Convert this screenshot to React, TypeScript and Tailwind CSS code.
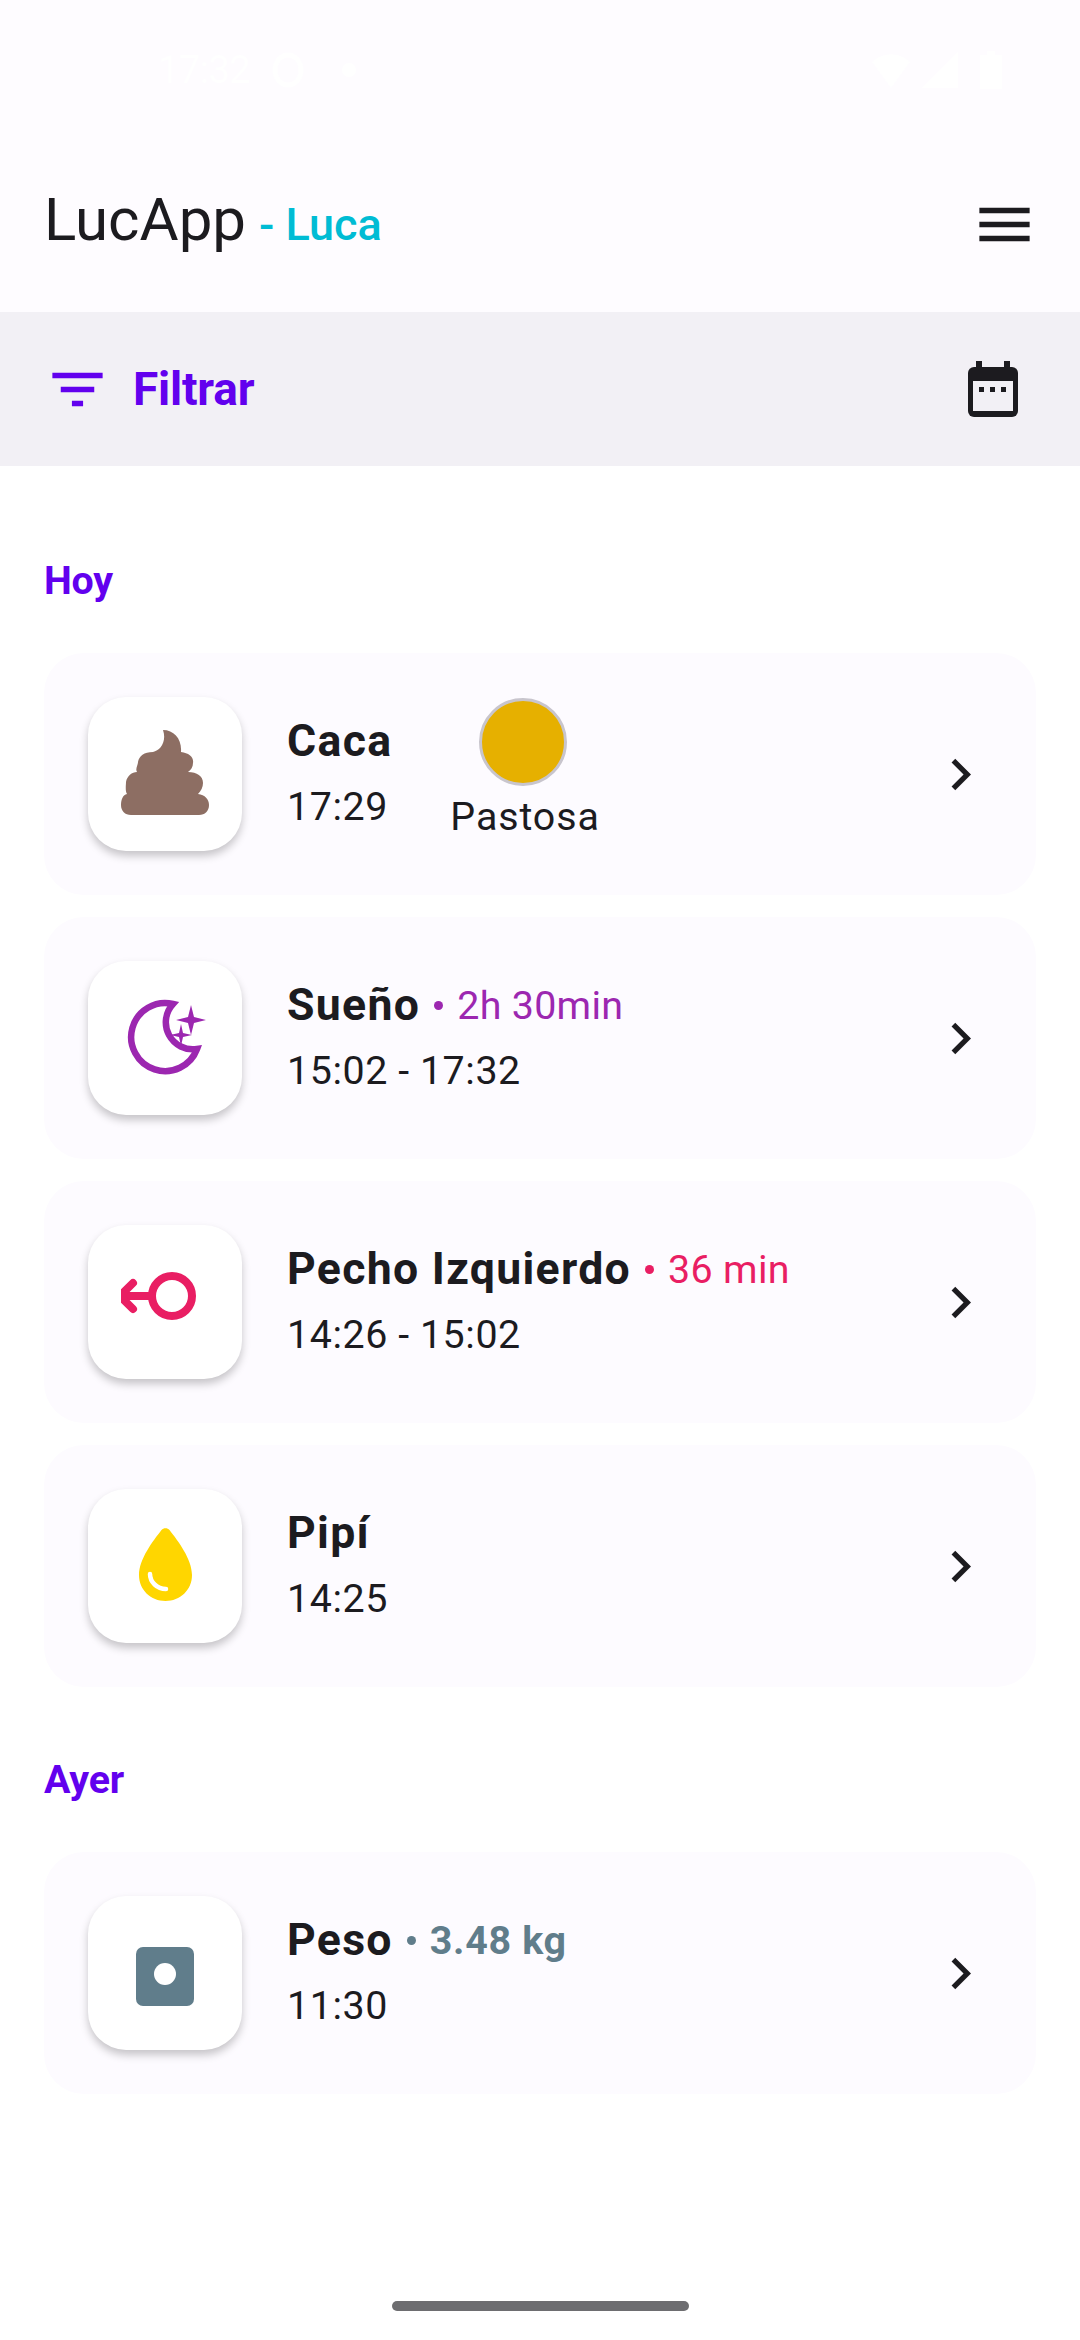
import { ReactNode } from "react";

const INK = "#1c1b1f";

const MaterialIcon = ({ d, size, color = INK }: { d: string; size: number; color?: string }) => (
  <svg width={size} height={size} viewBox="0 0 24 24" fill={color} className="shrink-0">
    <path d={d} />
  </svg>
);

const PoopIcon = () => (
  <svg viewBox="0 0 154 154" className="w-full h-full">
    <path
      fill="#8d6e63"
      d="M75 33 C86 33 94 42 93 55 C101 56 106 60 105 66 C105 70 103 73 100 75 C109 75 115 79 115 86 C115 90 113 94 110 97 C117 98 121 102 121 108 C121 114 117 118 111 118 L43 118 C37 118 33 114 33 108 C33 102 35 98 39 97 C37 94 38 88 38 85 C39 79 44 75 49 75 C47 72 50 68 50 65 C51 59 56 55 65 55 C72 54 79 45 75 33 Z"
    />
  </svg>
);

const MoonIcon = () => (
  <svg viewBox="0 0 154 154" className="w-full h-full">
    <g transform="translate(1 0)">
      <path
        fill="none"
        stroke="#9c27b0"
        strokeWidth="6.5"
        d="M84 43 A34 34 0 1 0 108 88 A27 27 0 0 1 84 43 Z"
      />
      <path fill="#9c27b0" d="M102 44 L105 56 L117 59 L105 62 L102 74 L99 62 L87 59 L99 56 Z" />
      <path fill="#9c27b0" d="M92 63 L94 72 L103 74 L94 76 L92 85 L90 76 L81 74 L90 72 Z" />
    </g>
  </svg>
);

const BreastIcon = () => (
  <svg viewBox="0 0 154 154" className="w-full h-full">
    <defs>
      <clipPath id="leftCut">
        <rect x="33" y="0" width="121" height="154" />
      </clipPath>
    </defs>
    <g clipPath="url(#leftCut)" fill="none" stroke="#e91e63" strokeWidth="8" strokeLinecap="round" transform="translate(0 1)">
      <circle cx="84" cy="70" r="20" />
      <path d="M64 70 H34" />
      <path d="M45 57 L32 70 L45 83" />
    </g>
  </svg>
);

const DropIcon = () => (
  <svg viewBox="0 0 154 154" className="w-full h-full">
    <path
      fill="#ffd600"
      d="M73.5 41 C75.5 38.5 79.5 38.5 81.5 41 C90 52 104 70 104 86 C104 101 92 112 77.5 112 C63 112 51 101 51 86 C51 70 65 52 73.5 41 Z"
    />
    <path fill="none" stroke="#ffffff" strokeWidth="4.5" strokeLinecap="round" d="M62 85 C62 93 69 100 78 100" />
  </svg>
);

const ScaleIcon = () => (
  <svg viewBox="0 0 154 154" className="w-full h-full">
    <rect x="48" y="51" width="58" height="59" rx="7" fill="#607d8b" />
    <ellipse cx="77" cy="78" rx="11" ry="11" fill="#ffffff" />
  </svg>
);

const CalendarIcon = () => (
  <svg width="50" height="56" viewBox="0 0 50 56" className="shrink-0">
    <rect x="8" y="0" width="6" height="8" fill={INK} />
    <rect x="36" y="0" width="6" height="8" fill={INK} />
    <rect x="0" y="6" width="50" height="50" rx="6" fill={INK} />
    <rect x="5" y="20" width="40" height="30" fill="#f2f0f5" />
    <rect x="11" y="26" width="5" height="5" fill={INK} />
    <rect x="22" y="26" width="5" height="5" fill={INK} />
    <rect x="33" y="26" width="5" height="5" fill={INK} />
  </svg>
);

const StatusBar = () => (
  <div className="h-[136px] flex items-start justify-between pt-[50px] pl-[158px] pr-[78px] text-white">
    <div className="flex items-center h-[40px]">
      <span className="text-[38px] leading-[40px] tracking-[-0.5px]">17:32</span>
      <svg width="32" height="36" viewBox="0 0 32 36" className="ml-[22px]">
        <ellipse cx="16" cy="18" rx="13" ry="15" fill="none" stroke="#ffffff" strokeWidth="5" />
      </svg>
      <span className="ml-[38px] w-[14px] h-[14px] rounded-full bg-white" />
    </div>
    <div className="flex items-center gap-[12px] h-[40px]">
      <svg width="38" height="36" viewBox="0 0 38 36">
        <path d="M0 10 C10 0 28 0 38 10 L19 36 Z" fill="#ffffff" />
      </svg>
      <svg width="36" height="36" viewBox="0 0 36 36">
        <path d="M36 0 V36 H0 Z" fill="#ffffff" />
      </svg>
      <svg width="22" height="38" viewBox="0 0 22 38" className="ml-[10px]">
        <path d="M7 0 H15 V4 H22 V38 H0 V4 H7 Z" fill="#ffffff" />
      </svg>
    </div>
  </div>
);

const Row = ({ icon, children, time, extra }: { icon: ReactNode; children: ReactNode; time: string; extra?: ReactNode }) => (
  <div className="h-[242px] rounded-[40px] bg-[#fdfbff] flex items-center pl-[44px] pr-[44px]">
    <div className="w-[154px] h-[154px] rounded-[38px] bg-white shrink-0 shadow-[0_5px_9px_rgba(0,0,0,0.22)]">{icon}</div>
    <div className="ml-[45px]">
      <div className="h-[65px] flex items-center">{children}</div>
      <div className="h-[65px] flex items-center text-[39.4px] tracking-[0.55px]">{time}</div>
    </div>
    {extra}
    <div className="ml-auto">
      <MaterialIcon size={63} d="M8.59 16.59L13.17 12 8.59 7.41 10 6l6 6-6 6z" />
    </div>
  </div>
);

const Title = ({ children }: { children: ReactNode }) => (
  <span className="text-[44.6px] font-bold tracking-[1.3px]">{children}</span>
);

const Detail = ({ color, bold, children }: { color: string; bold?: boolean; children: ReactNode }) => (
  <span
    className={`ml-[14px] flex items-center text-[39.4px] ${bold ? "font-bold tracking-[0.66px]" : "tracking-[0.3px]"}`}
    style={{ color }}
  >
    <span className="w-[9px] h-[9px] rounded-full mr-[14px]" style={{ backgroundColor: color }} />
    {children}
  </span>
);

const SectionLabel = ({ className, children }: { className: string; children: ReactNode }) => (
  <h2 className={`h-[48px] flex items-center text-[39.4px] font-bold tracking-[-0.2px] text-[#6200ee] mb-[48px] ${className}`}>{children}</h2>
);

const App = () => {
  return (
    <div className="w-[1080px] h-[2340px] overflow-hidden bg-white text-[#1c1b1f] font-['Roboto',sans-serif]">
      <div className="bg-[#fefcff]">
        <StatusBar />

        {/* Header */}
        <header className="h-[176px] flex items-center justify-between pl-[44px] pr-[42px]">
          <div className="flex items-baseline">
            <span className="text-[60px] leading-none">LucApp</span>
            <span className="ml-[13px] text-[45px] font-medium text-[#00bcd4]">- Luca</span>
          </div>
          <MaterialIcon size={67} d="M3 18h18v-2H3v2zm0-5h18v-2H3v2zm0-7v2h18V6H3z" />
        </header>
      </div>

      {/* Filter bar */}
      <div className="h-[154px] bg-[#f2f0f5] flex items-center justify-between pl-[44px] pr-[62px]">
        <div className="flex items-center">
          <MaterialIcon size={67} color="#6200ee" d="M10 18h4v-2h-4v2zM3 6v2h18V6H3zm3 7h12v-2H6v2z" />
          <span className="ml-[22px] text-[46px] font-bold tracking-[-0.2px] text-[#6200ee]">Filtrar</span>
        </div>
        <CalendarIcon />
      </div>

      <main className="px-[44px]">
        <SectionLabel className="mt-[91px]">Hoy</SectionLabel>
        <div className="flex flex-col gap-[22px]">
          <Row
            icon={<PoopIcon />}
            time="17:29"
            extra={
              <div className="ml-[58px] -mt-[10px] flex flex-col items-center">
                <span className="w-[88px] h-[88px] rounded-full bg-[#e6b000] border-[3px] border-[#c8c5cd] -translate-x-[2px]" />
                <span className="mt-[7px] text-[39.4px] leading-[48px] tracking-[0.9px]">Pastosa</span>
              </div>
            }
          >
            <Title>Caca</Title>
          </Row>
          <Row icon={<MoonIcon />} time="15:02 - 17:32">
            <Title>Sueño</Title>
            <Detail color="#9c27b0">2h 30min</Detail>
          </Row>
          <Row icon={<BreastIcon />} time="14:26 - 15:02">
            <Title>Pecho Izquierdo</Title>
            <Detail color="#e91e63">36 min</Detail>
          </Row>
          <Row icon={<DropIcon />} time="14:25">
            <Title>Pipí</Title>
          </Row>
        </div>

        <SectionLabel className="mt-[69px]">Ayer</SectionLabel>
        <Row icon={<ScaleIcon />} time="11:30">
          <Title>Peso</Title>
          <Detail color="#607d8b" bold>3.48 kg</Detail>
        </Row>
      </main>

      {/* Gesture pill */}
      <div className="mt-[207px] mx-auto w-[297px] h-[10px] rounded-full bg-[#6d6d70]" />
    </div>
  );
};

export default App;
